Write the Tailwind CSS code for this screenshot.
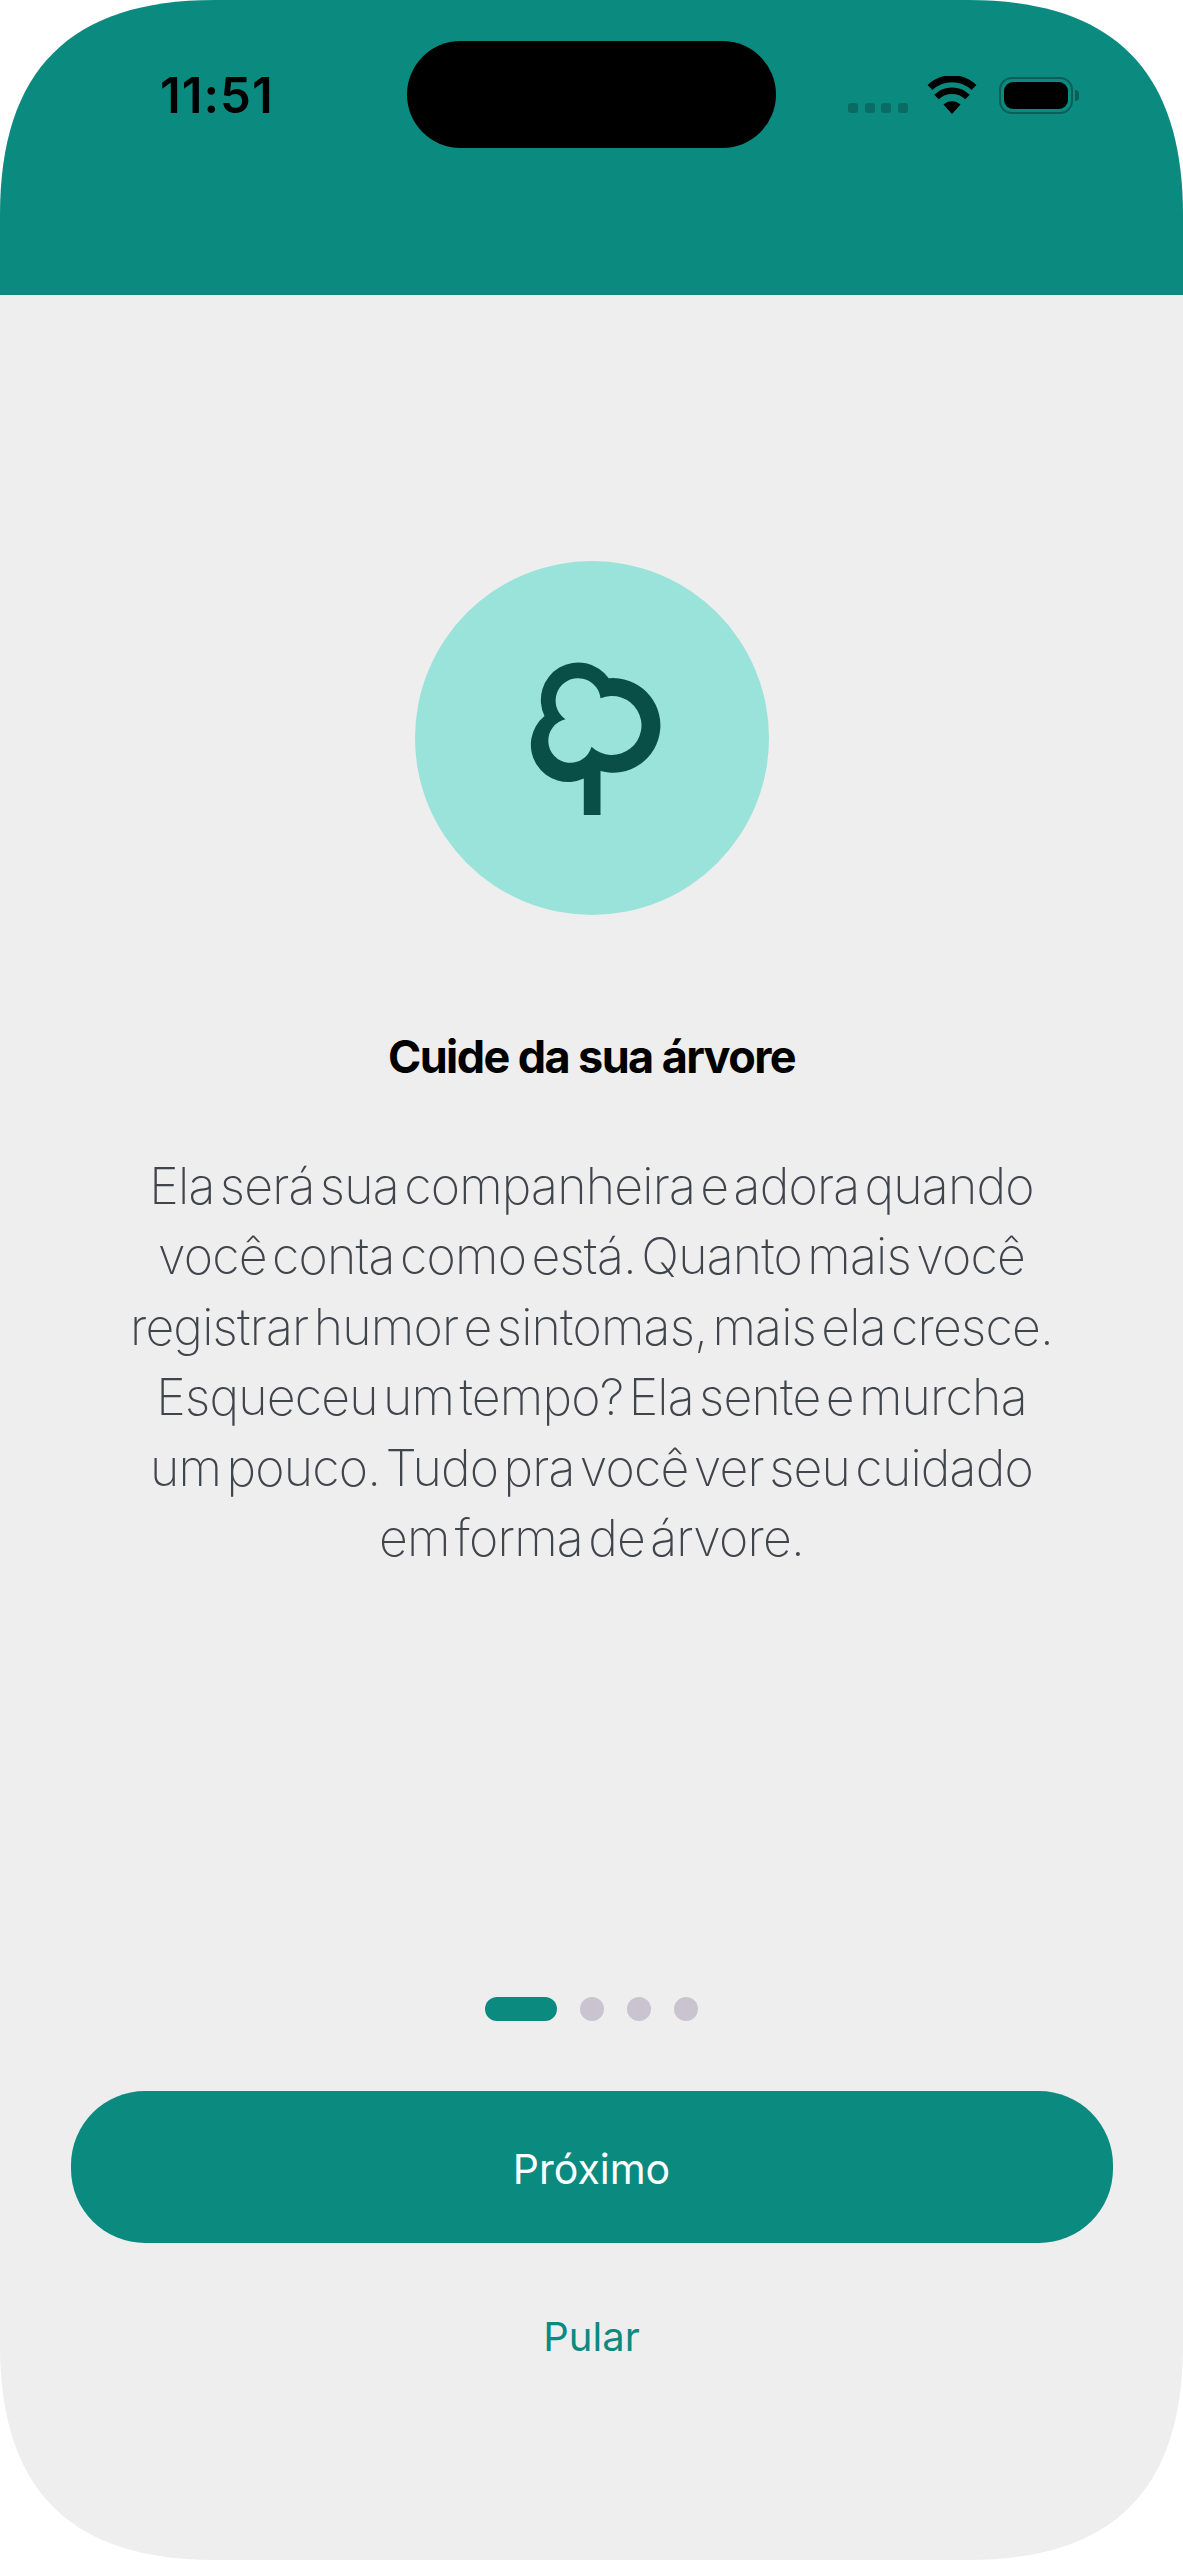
<!doctype html>
<html lang="pt-BR">
<head>
<meta charset="utf-8">
<script src="https://cdn.jsdelivr.net/npm/@tailwindcss/browser@4"></script>
<title>Cuide da sua árvore</title>
</head>
<body class="bg-white font-['Inter',sans-serif]">
<div class="w-[1183px] h-[2560px] [clip-path:path('M0_215C0_70_70_0_215_0H968C1113_0_1183_70_1183_215V2345C1183_2490_1113_2560_968_2560H215C70_2560_0_2490_0_2345Z')] bg-[#eeeeee] flex flex-col items-center">
  <header class="relative w-full h-[295px] shrink-0 bg-[#0b8a80]">
    <span class="absolute left-[160px] top-[67px] text-[49px] leading-[58px] font-semibold text-black tracking-[1px]">11:51</span>
    <div class="absolute left-[407px] top-[41px] w-[369px] h-[107px] rounded-[54px] bg-black"></div>
    <div class="absolute left-[848px] top-[103px] flex gap-[6.5px]">
      <i class="block w-[10px] h-[10px] rounded-[3px] bg-[#0a6b64]"></i>
      <i class="block w-[10px] h-[10px] rounded-[3px] bg-[#0a6b64]"></i>
      <i class="block w-[10px] h-[10px] rounded-[3px] bg-[#0a6b64]"></i>
      <i class="block w-[10px] h-[10px] rounded-[3px] bg-[#0a6b64]"></i>
    </div>
    <svg class="absolute left-[927px] top-[76px]" width="50" height="38" viewBox="0 0 50 38" fill="none">
      <path d="M25 38 L16.5 28.5 A12.5 12.5 0 0 1 33.5 28.5 Z" fill="#000"/>
      <path d="M9.5 21 A22.5 22.5 0 0 1 40.5 21" stroke="#000" stroke-width="6.5"/>
      <path d="M3 11.5 A32 32 0 0 1 47 11.5" stroke="#000" stroke-width="7"/>
    </svg>
    <div class="absolute left-[999px] top-[77px] w-[74px] h-[37px] rounded-[13px] border-[2px] border-[#0a5f59] p-[3px]">
      <div class="w-full h-full rounded-[9px] bg-black"></div>
    </div>
    <div class="absolute left-[1075px] top-[90px] w-[4px] h-[11px] rounded-r-[4px] bg-[#0a5f59]"></div>
  </header>

  <main class="flex flex-col items-center w-full">
    <div class="mt-[266px] w-[354px] h-[354px] rounded-full bg-[#9ae3db] flex items-center justify-center">
      <svg width="220" height="210" viewBox="1.5 3 220 210">
        <path fill="#0a4f47" fill-rule="evenodd" d="M128.3 48.3 A37.4 37.4 0 0 0 64 86 A37.2 37.2 0 0 0 103.3 148.5 V185 H120 V141 A47.3 47.3 0 1 0 128.3 48.3 Z M120 68.3 A22.5 22.5 0 1 0 85 89.3 A22 22 0 1 0 111 116.7 A29.5 29.5 0 1 0 120 68.3 Z"/>
      </svg>
    </div>
    <h1 class="mt-[116px] text-[45px] leading-[52px] font-bold text-black tracking-[-1.6px] text-center">Cuide da sua árvore</h1>
    <p class="mt-[68px] text-[50px] leading-[70.4px] font-extralight text-[#40454c] tracking-[-0.8px] [word-spacing:-8px] text-center whitespace-nowrap">
      <span class="block">Ela será sua companheira e adora quando</span>
      <span class="block">você conta como está. Quanto mais você</span>
      <span class="block">registrar humor e sintomas, mais ela cresce.</span>
      <span class="block">Esqueceu um tempo? Ela sente e murcha</span>
      <span class="block">um pouco. Tudo pra você ver seu cuidado</span>
      <span class="block">em forma de árvore.</span>
    </p>
    <div class="mt-[424px] flex items-center gap-[23px]">
      <i class="block w-[72px] h-[24px] rounded-[12px] bg-[#0b8a80]"></i>
      <i class="block w-[24px] h-[24px] rounded-full bg-[#cac4d0]"></i>
      <i class="block w-[24px] h-[24px] rounded-full bg-[#cac4d0]"></i>
      <i class="block w-[24px] h-[24px] rounded-full bg-[#cac4d0]"></i>
    </div>
    <button class="mt-[70px] w-[1042px] h-[152px] pt-[4px] rounded-[74px] bg-[#0b8a80] text-white text-[41px] font-normal flex items-center justify-center">Próximo</button>
    <button class="mt-[70px] h-[48px] text-[40px] leading-[48px] font-normal text-[#0b8a80]">Pular</button>
  </main>
</div>
</body>
</html>
